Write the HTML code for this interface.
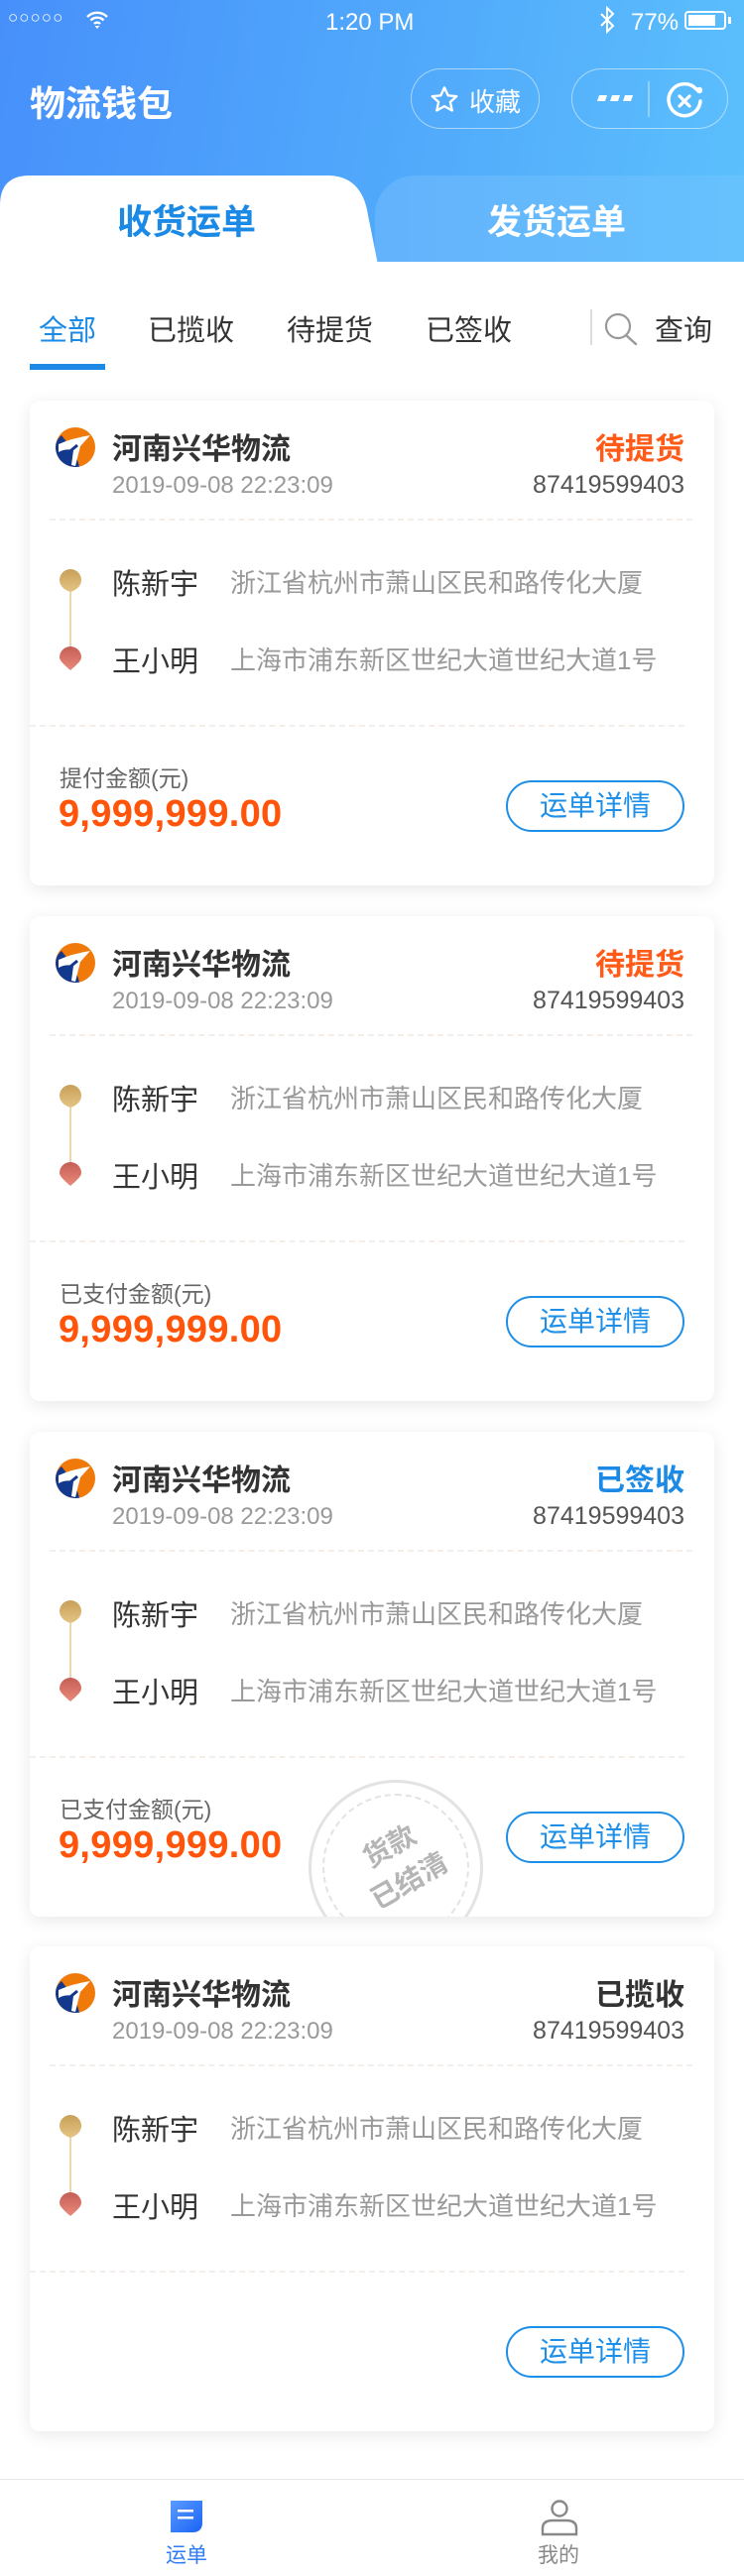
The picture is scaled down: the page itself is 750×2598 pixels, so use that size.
<!DOCTYPE html>
<html><head><meta charset="utf-8"><style>
*{margin:0;padding:0;box-sizing:border-box}
body{width:750px;height:2598px;position:relative;background:#fff;font-family:"Liberation Sans","Noto Sans CJK SC",sans-serif;overflow:hidden}
.a{position:absolute;white-space:nowrap}
.hdr{position:absolute;left:0;top:0;width:750px;height:266px;background:linear-gradient(100deg,#4790fb 0%,#52acfb 60%,#5cc0fc 100%)}
.card{position:absolute;left:30px;width:690px;height:489px;background:#fff;border-radius:10px;box-shadow:0 4px 18px rgba(0,0,0,0.09)}
.dash{position:absolute;height:0;border-top:2px dashed #f3eeea}
.btn{position:absolute;left:480px;top:383px;width:180px;height:52px;border:2px solid #1e8fe8;border-radius:26px;color:#1e8fe8;font-size:28px;text-align:center;line-height:48px}
.co{left:83px;top:24px;font-size:30px;font-weight:bold;color:#333}
.st{right:30px;top:24px;font-size:30px;font-weight:bold}
.dt{left:83px;top:72px;font-size:24px;color:#999}
.no{right:30px;top:71px;font-size:25px;color:#555}
.nm{left:83px;font-size:29px;color:#333}
.ad{left:202px;font-size:26px;color:#999}
.amt{left:29px;top:396px;font-size:38px;font-weight:bold;color:#ff540a;letter-spacing:0.3px}
.lb{left:30px;top:362px;font-size:23px;color:#666}
</style></head><body>
<div class="hdr"></div>
<svg width="0" height="0" style="position:absolute"><defs><linearGradient id="g1" x1="0" y1="0" x2="0" y2="1"><stop offset="0" stop-color="#c7a059"/><stop offset="1" stop-color="#e5c483"/></linearGradient><linearGradient id="g2" x1="0" y1="0" x2="0" y2="1"><stop offset="0" stop-color="#c55e55"/><stop offset="1" stop-color="#e9897b"/></linearGradient><symbol id="logo" viewBox="0 0 40 40"><circle cx="20" cy="20" r="20" fill="#ef7a0a"/><path d="M0 20a20 20 0 0 0 24 19.6L20 26 6 8Q0 13 0 20z" fill="#12398c"/><path d="M3 17Q16 11 35 8L25 19 20 39 16 38 18 23Q10 21 3 25z" fill="#fff"/><path d="M5 32L22 18" stroke="#12398c" stroke-width="3"/></symbol><symbol id="pins" viewBox="0 0 24 102"><rect x="11" y="14" width="2" height="70" fill="#ecd6b1"/><path d="M12 23C5 21 1 16 1 11A11 11 0 0 1 23 11C23 16 19 21 12 23Z" fill="url(#g1)"/><path d="M12 102C5 96 1 92 1 89A11 11 0 0 1 23 89C23 92 19 96 12 102Z" fill="url(#g2)"/></symbol></defs></svg>
<!-- status bar -->
<div class="a" style="left:8px;top:8px;color:#fff;font-size:17px;letter-spacing:1px">○○○○○</div>
<svg class="a" style="left:86px;top:10px" width="24" height="20" viewBox="0 0 24 20"><path d="M2 7a14 14 0 0 1 20 0M5.5 10.5a9 9 0 0 1 13 0M9 14a4 4 0 0 1 6 0" stroke="#fff" stroke-width="2.4" fill="none"/><path d="M12 19l-2.5-3h5z" fill="#fff"/></svg>
<div class="a" style="left:328px;top:9px;color:#fff;font-size:24px">1:20 PM</div>
<svg class="a" style="left:604px;top:6px" width="16" height="28" viewBox="0 0 16 28"><path d="M2 8l12 12-6 6V2l6 6L2 20" stroke="#fff" stroke-width="2" fill="none"/></svg>
<div class="a" style="left:636px;top:9px;color:#fff;font-size:24px">77%</div>
<div class="a" style="left:690px;top:11px;width:42px;height:19px;border:2px solid #fff;border-radius:4px"><div style="position:absolute;left:2px;top:2px;width:27px;height:11px;background:#fff"></div></div>
<div class="a" style="left:734px;top:17px;width:3px;height:7px;background:#fff"></div>
<!-- title -->
<div class="a" style="left:30px;top:76px;color:#fff;font-size:36px;font-weight:bold">物流钱包</div>
<div class="a" style="left:414px;top:69px;width:130px;height:61px;border:1.5px solid rgba(255,255,255,0.5);border-radius:31px"></div>
<svg class="a" style="left:432px;top:85px" width="32" height="32" viewBox="0 0 24 24"><path d="M12 2.5l2.8 6 6.4.6-4.8 4.3 1.4 6.4L12 16.6l-5.8 3.2 1.4-6.4L2.8 9.1l6.4-.6z" fill="none" stroke="#fff" stroke-width="1.8" stroke-linejoin="round"/></svg>
<div class="a" style="left:473px;top:83px;color:#fff;font-size:26px">收藏</div>
<div class="a" style="left:576px;top:69px;width:158px;height:61px;border:1.5px solid rgba(255,255,255,0.5);border-radius:31px"></div>
<svg class="a" style="left:600px;top:94px" width="42" height="12"><path d="M4 2h8l-2 6H2zM17 2h8l-2 6h-8zM30 2h8l-2 6h-8z" fill="#fff"/></svg>
<div class="a" style="left:653px;top:82px;width:1.5px;height:36px;background:rgba(255,255,255,0.35)"></div>
<svg class="a" style="left:670px;top:82px" width="42" height="42" viewBox="0 0 42 42"><path d="M32 8A16 16 0 1 0 36 20" stroke="#fff" stroke-width="3.5" fill="none" stroke-linecap="round"/><circle cx="35" cy="9" r="3.2" fill="#fff"/><path d="M15 15l10 10M25 15l-10 10" stroke="#fff" stroke-width="3.2" stroke-linecap="round"/></svg>
<!-- tabs -->
<div class="a" style="left:378px;top:177px;width:380px;height:89px;background:linear-gradient(90deg,#63b2fc,#66c2fd);border-radius:40px 0 0 0"></div>
<svg class="a" style="left:0;top:177px" width="390" height="90"><path d="M0 90V30Q0 0 30 0H330Q365 0 371 40L381 90Z" fill="#fff"/></svg>
<div class="a" style="left:0;top:264px;width:750px;height:4px;background:#fff"></div>
<div class="a" style="left:118px;top:196px;color:#1b8ae6;font-size:35px;font-weight:bold">收货运单</div>
<div class="a" style="left:491px;top:196px;color:#fff;font-size:35px;font-weight:bold">发货运单</div>
<!-- filters -->
<div class="a" style="left:39px;top:310px;color:#1b8ae6;font-size:29px">全部</div>
<div class="a" style="left:30px;top:367px;width:76px;height:6px;background:#1b8ae6"></div>
<div class="a" style="left:149px;top:310px;color:#333;font-size:29px">已揽收</div>
<div class="a" style="left:289px;top:310px;color:#333;font-size:29px">待提货</div>
<div class="a" style="left:429px;top:310px;color:#333;font-size:29px">已签收</div>
<div class="a" style="left:595px;top:312px;width:2px;height:36px;background:#ddd"></div>
<svg class="a" style="left:608px;top:314px" width="40" height="36"><circle cx="15" cy="15" r="12" stroke="#999" stroke-width="2.2" fill="none"/><path d="M23 24l10 9" stroke="#999" stroke-width="2.4" stroke-linecap="round"/></svg>
<div class="a" style="left:660px;top:310px;color:#333;font-size:29px">查询</div>

<div class="card" style="top:404px">
 <svg class="a" style="left:26px;top:27px" width="40" height="40"><use href="#logo"/></svg>
 <div class="a co">河南兴华物流</div>
 <div class="a st" style="color:#ff5a17">待提货</div>
 <div class="a dt">2019-09-08 22:23:09</div>
 <div class="a no">87419599403</div>
 <div class="dash" style="left:20px;top:119px;width:648px"></div>
 <svg class="a" style="left:29px;top:170px" width="24" height="102"><use href="#pins"/></svg>
 <div class="a nm" style="top:162px">陈新宇</div>
 <div class="a ad" style="top:164px">浙江省杭州市萧山区民和路传化大厦</div>
 <div class="a nm" style="top:240px">王小明</div>
 <div class="a ad" style="top:242px">上海市浦东新区世纪大道世纪大道1号</div>
 <div class="dash" style="left:0;top:327px;width:660px"></div>
 <div class="a lb">提付金额(元)</div>
 <div class="a amt">9,999,999.00</div>
 <div class="btn">运单详情</div>
</div>

<div class="card" style="top:924px">
 <svg class="a" style="left:26px;top:27px" width="40" height="40"><use href="#logo"/></svg>
 <div class="a co">河南兴华物流</div>
 <div class="a st" style="color:#ff5a17">待提货</div>
 <div class="a dt">2019-09-08 22:23:09</div>
 <div class="a no">87419599403</div>
 <div class="dash" style="left:20px;top:119px;width:648px"></div>
 <svg class="a" style="left:29px;top:170px" width="24" height="102"><use href="#pins"/></svg>
 <div class="a nm" style="top:162px">陈新宇</div>
 <div class="a ad" style="top:164px">浙江省杭州市萧山区民和路传化大厦</div>
 <div class="a nm" style="top:240px">王小明</div>
 <div class="a ad" style="top:242px">上海市浦东新区世纪大道世纪大道1号</div>
 <div class="dash" style="left:0;top:327px;width:660px"></div>
 <div class="a lb">已支付金额(元)</div>
 <div class="a amt">9,999,999.00</div>
 <div class="btn">运单详情</div>
</div>

<div class="card" style="top:1444px;overflow:hidden">
 <svg class="a" style="left:26px;top:27px" width="40" height="40"><use href="#logo"/></svg>
 <div class="a co">河南兴华物流</div>
 <div class="a st" style="color:#1b8ae6">已签收</div>
 <div class="a dt">2019-09-08 22:23:09</div>
 <div class="a no">87419599403</div>
 <div class="dash" style="left:20px;top:119px;width:648px"></div>
 <svg class="a" style="left:29px;top:170px" width="24" height="102"><use href="#pins"/></svg>
 <div class="a nm" style="top:162px">陈新宇</div>
 <div class="a ad" style="top:164px">浙江省杭州市萧山区民和路传化大厦</div>
 <div class="a nm" style="top:240px">王小明</div>
 <div class="a ad" style="top:242px">上海市浦东新区世纪大道世纪大道1号</div>
 <div class="dash" style="left:0;top:327px;width:660px"></div>
 <div class="a lb">已支付金额(元)</div>
 <div class="a amt">9,999,999.00</div>
 <div class="a" style="left:281px;top:351px;width:176px;height:176px;border:3px solid #e3e3e3;border-radius:50%"></div>
 <div class="a" style="left:295px;top:365px;width:148px;height:148px;border:2px dashed #e3e3e3;border-radius:50%"></div>
 <div class="a" style="left:318px;top:396px;width:110px;text-align:center;font-size:28px;font-weight:bold;color:#b5b5b5;line-height:40px;transform:rotate(-30deg);white-space:normal">货款<br>已结清</div>
 <div class="btn">运单详情</div>
</div>

<div class="card" style="top:1963px">
 <svg class="a" style="left:26px;top:27px" width="40" height="40"><use href="#logo"/></svg>
 <div class="a co">河南兴华物流</div>
 <div class="a st" style="color:#333">已揽收</div>
 <div class="a dt">2019-09-08 22:23:09</div>
 <div class="a no">87419599403</div>
 <div class="dash" style="left:20px;top:119px;width:648px"></div>
 <svg class="a" style="left:29px;top:170px" width="24" height="102"><use href="#pins"/></svg>
 <div class="a nm" style="top:162px">陈新宇</div>
 <div class="a ad" style="top:164px">浙江省杭州市萧山区民和路传化大厦</div>
 <div class="a nm" style="top:240px">王小明</div>
 <div class="a ad" style="top:242px">上海市浦东新区世纪大道世纪大道1号</div>
 <div class="dash" style="left:0;top:327px;width:660px"></div>
 <div class="btn">运单详情</div>
</div>

<!-- tab bar -->
<div class="a" style="left:0;top:2500px;width:750px;height:98px;background:#fff;border-top:1.5px solid #e6e6e6"></div>
<svg class="a" style="left:172px;top:2522px" width="32" height="34"><defs><linearGradient id="tb" x1="0" y1="0" x2="1" y2="1"><stop offset="0" stop-color="#5a9bff"/><stop offset="1" stop-color="#1a63f5"/></linearGradient></defs><path d="M0 0H32V22Q32 32 22 32H0Z" fill="url(#tb)"/><rect x="7" y="9" width="16" height="2.5" fill="#fff"/><rect x="7" y="16" width="16" height="2.5" fill="#fff"/></svg>
<div class="a" style="left:167px;top:2561px;font-size:21px;color:#2f7cf6">运单</div>
<svg class="a" style="left:545px;top:2520px" width="38" height="38"><circle cx="19" cy="10" r="7.5" stroke="#888" stroke-width="2.4" fill="none"/><path d="M2 36V30Q2 22 12 22H26Q36 22 36 30V36Z" stroke="#888" stroke-width="2.4" fill="none"/></svg>
<div class="a" style="left:542px;top:2561px;font-size:21px;color:#888">我的</div>
</body></html>
